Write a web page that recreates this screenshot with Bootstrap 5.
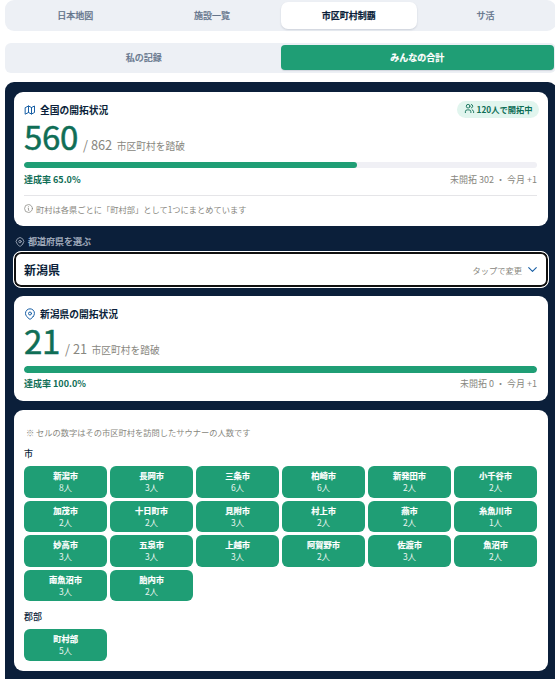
<!DOCTYPE html>
<html lang="ja">
<head>
<meta charset="utf-8">
<meta name="viewport" content="width=device-width, initial-scale=1">
<title>市区町村制覇</title>
<link href="https://cdn.jsdelivr.net/npm/bootstrap@5.3.0/dist/css/bootstrap.min.css" rel="stylesheet">
<style>
  html, body { overflow: hidden; height: 100%; }
  body { font-family: "Noto Sans CJK JP", sans-serif; font-size: 9px; line-height: 12px; color: #0b1f3a; background: #fff; }
  svg { display: block; fill: none; stroke: currentColor; stroke-width: 2; stroke-linecap: round; stroke-linejoin: round; flex: none; }
  .page { width: 552px; margin-left: 5px; }
  .seg { background: #edf0f5; width: 551px; color: #64748b; font-weight: 500; -webkit-text-stroke: .2px; }
  .seg-main { height: 31px; border-radius: 9px; padding: 2px; }
  .seg-sub { height: 30px; border-radius: 6px; padding: 2px 2px 3px; margin-top: 12px; }
  .seg button { border: 0; background: none; color: inherit; font-weight: inherit; padding: 0; line-height: 12px; }
  .seg .on-light { background: #fff; color: #0b1f3a; font-weight: 700; border-radius: 7px; box-shadow: 0 1px 2px rgba(15,30,60,.14); }
  .seg .on-green { background: #1f9e75; color: #fff; font-weight: 700; border-radius: 4px; box-shadow: 0 1px 1px rgba(15,30,60,.12); }
  .board { background: #0b1f3a; margin-top: 9px; height: 620px; border-radius: 9px 9px 0 0; padding: 10px 9px 0; }
  .panel { background: #fff; border-radius: 9px; padding: 10px 11px 0 10px; }
  .panel-country { height: 134px; }
  .panel-pref { height: 105px; margin-top: 8px; }
  .panel-cells { height: 261px; margin-top: 9px; padding-top: 16px; }
  .ttl { font-size: 9.75px; font-weight: 700; line-height: 16px; gap: 4px; height: 16px; }
  .ttl svg { color: #185fa5; }
  .pill { background: #e1f5ee; color: #0f6e56; border-radius: 9px; height: 17px; width: 82px; margin: -1px -2px 0 0; padding-bottom: 2px; font-size: 8.25px; font-weight: 700; gap: 2px; white-space: nowrap; }
  .score { height: 36px; line-height: 36px; color: #888780; white-space: nowrap; }
  .num { font-size: 33px; font-weight: 400; color: #0f6e56; -webkit-text-stroke: .5px; letter-spacing: -.3px; }
  .of { font-size: 12.75px; margin-left: 5px; }
  .unit { font-size: 9.75px; margin-left: 4.5px; }
  .bar { height: 6px; border-radius: 3px; background: #f0f0f5; margin-top: 8px; }
  .bar-pref { height: 7px; border-radius: 4px; }
  .bar .progress-bar { background: #1f9e75; border-radius: 4px; }
  .stat { height: 14px; line-height: 14px; margin-top: 4px; }
  .panel-country .stat { margin-top: 5px; }
  .rate { color: #0f6e56; font-weight: 700; }
  .gray { color: #888780; }
  .note { border-top: 1px solid #e5e5e8; margin-top: 8px; padding-top: 6px; font-size: 8.25px; line-height: 14px; gap: 3px; }
  .note svg { margin-top: 2px; }
  .pick { height: 25px; padding: 9px 0 0 1px; color: #a7b1c0; line-height: 13px; gap: 3px; font-weight: 500; -webkit-text-stroke: .2px; }
  .pick svg { margin-top: 2px; }
  .select-pref { display: flex; width: 536px; margin: 0 -1px; height: 37px; border: 1px solid #fff; background: #fff; border-radius: 8px; box-shadow: inset 0 0 0 2px #101010; padding: 0 9px 0 10px; font-size: 12px; font-weight: 700; color: #0b1f3a; }
  .tap { font-size: 8.25px; font-weight: 400; color: #888780; }
  .remark { font-size: 8.25px; padding-left: 2px; }
  .grp { font-size: 9px; font-weight: 500; line-height: 13px; margin: 9px 0 6px; }
  .cells { display: grid; grid-template-columns: repeat(6, 83px); gap: 3px; grid-auto-rows: 31.6px; }
  .cell { background: #1f9e75; border-radius: 6px; color: #fff; text-align: center; font-size: 8.25px; line-height: 12px; padding-top: 3px; }
  .cell b { display: block; font-weight: 700; -webkit-text-stroke: .2px; }
  .cell span { display: block; opacity: .9; font-size: 8.5px; }
</style>
</head>
<body>
<div class="page">
  <nav class="seg seg-main d-flex">
    <button class="col">日本地図</button>
    <button class="col">施設一覧</button>
    <button class="col on-light">市区町村制覇</button>
    <button class="col">サ活</button>
  </nav>
  <nav class="seg seg-sub d-flex">
    <button class="col">私の記録</button>
    <button class="col on-green">みんなの合計</button>
  </nav>

  <main class="board">
    <section class="panel panel-country">
      <div class="d-flex justify-content-between">
        <div class="ttl d-flex align-items-center">
          <svg width="12" height="12" viewBox="0 0 24 24"><path d="M3 7l6-3 6 3 6-3v13l-6 3-6-3-6 3zM9 4v13M15 7v13"/></svg>
          <span>全国の開拓状況</span>
        </div>
        <div class="pill d-flex align-items-center justify-content-center">
          <svg width="11" height="11" viewBox="0 0 24 24"><circle cx="9" cy="7" r="4"/><path d="M3 21v-2a4 4 0 0 1 4-4h4a4 4 0 0 1 4 4v2M16 3.1a4 4 0 0 1 0 7.8M21 21v-2a4 4 0 0 0-3-3.9"/></svg>
          <span>120人で開拓中</span>
        </div>
      </div>
      <div class="score d-flex align-items-baseline"><span class="num">560</span><span class="of">/ 862</span><span class="unit">市区町村を踏破</span></div>
      <div class="bar progress"><div class="progress-bar" style="width:65%"></div></div>
      <div class="stat d-flex justify-content-between"><span class="rate">達成率 65.0%</span><span class="gray">未開拓 302 ・ 今月 +1</span></div>
      <div class="note gray d-flex">
        <svg width="9" height="9" viewBox="0 0 24 24"><circle cx="12" cy="12" r="10.5"/><path d="M12 7h.01M11 11h1v6h1"/></svg>
        <span>町村は各県ごとに「町村部」として1つにまとめています</span>
      </div>
    </section>

    <div class="pick d-flex">
      <svg width="10" height="10" viewBox="1 0 22 24"><circle cx="12" cy="11" r="3"/><path d="M18.400 17L13.500 22a2 2 0 0 1-3 0l-4.900-5a9 9 0 1 1 12.800 0z"/></svg>
      <span>都道府県を選ぶ</span>
    </div>
    <button class="select-pref align-items-center justify-content-between">
      <span>新潟県</span>
      <span class="d-flex align-items-center gap-1"><span class="tap">タップで変更</span><svg width="13" height="13" viewBox="0 0 24 24" color="#185fa5"><path d="M5 8.500l7 7 7-7"/></svg></span>
    </button>

    <section class="panel panel-pref">
      <div class="ttl d-flex align-items-center">
        <svg width="12" height="12" viewBox="0 0 24 24"><circle cx="12" cy="11" r="3"/><path d="M18.400 17L13.500 22a2 2 0 0 1-3 0l-4.900-5a9 9 0 1 1 12.800 0z"/></svg>
        <span>新潟県の開拓状況</span>
      </div>
      <div class="score d-flex align-items-baseline"><span class="num">21</span><span class="of">/ 21</span><span class="unit">市区町村を踏破</span></div>
      <div class="bar bar-pref progress"><div class="progress-bar" style="width:100%"></div></div>
      <div class="stat d-flex justify-content-between"><span class="rate">達成率 100.0%</span><span class="gray">未開拓 0 ・ 今月 +1</span></div>
    </section>

    <section class="panel panel-cells">
      <div class="gray remark">※ セルの数字はその市区町村を訪問したサウナーの人数です</div>
      <div class="grp">市</div>
      <div class="cells">
        <div class="cell"><b>新潟市</b><span>8人</span></div>
        <div class="cell"><b>長岡市</b><span>3人</span></div>
        <div class="cell"><b>三条市</b><span>6人</span></div>
        <div class="cell"><b>柏崎市</b><span>6人</span></div>
        <div class="cell"><b>新発田市</b><span>2人</span></div>
        <div class="cell"><b>小千谷市</b><span>2人</span></div>
        <div class="cell"><b>加茂市</b><span>2人</span></div>
        <div class="cell"><b>十日町市</b><span>2人</span></div>
        <div class="cell"><b>見附市</b><span>3人</span></div>
        <div class="cell"><b>村上市</b><span>2人</span></div>
        <div class="cell"><b>燕市</b><span>2人</span></div>
        <div class="cell"><b>糸魚川市</b><span>1人</span></div>
        <div class="cell"><b>妙高市</b><span>3人</span></div>
        <div class="cell"><b>五泉市</b><span>3人</span></div>
        <div class="cell"><b>上越市</b><span>3人</span></div>
        <div class="cell"><b>阿賀野市</b><span>2人</span></div>
        <div class="cell"><b>佐渡市</b><span>3人</span></div>
        <div class="cell"><b>魚沼市</b><span>2人</span></div>
        <div class="cell"><b>南魚沼市</b><span>3人</span></div>
        <div class="cell"><b>胎内市</b><span>2人</span></div>
      </div>
      <div class="grp">郡部</div>
      <div class="cells">
        <div class="cell"><b>町村部</b><span>5人</span></div>
      </div>
    </section>
  </main>
</div>
<script src="https://cdn.jsdelivr.net/npm/bootstrap@5.3.0/dist/js/bootstrap.bundle.min.js"></script>
</body>
</html>
